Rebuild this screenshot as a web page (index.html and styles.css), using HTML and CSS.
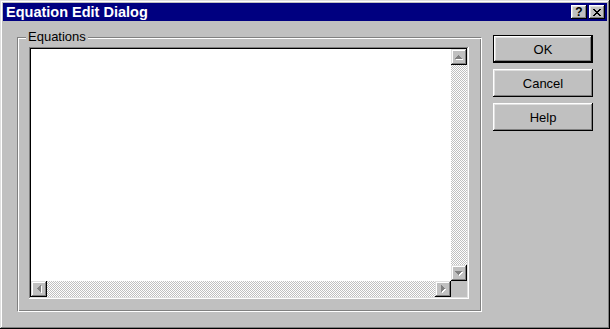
FILE: index.html
```html
<!DOCTYPE html>
<html lang="en">

<head>
  <meta charset="UTF-8">
  <title>Equation Edit Dialog</title>
  <link rel="stylesheet" href="styles.css">
</head>

<body>
  <div class="window">
    <div class="titlebar">
      <span class="title">Equation Edit Dialog</span>
      <div class="title-btns">
        <button class="tbtn help">?</button>
        <button class="tbtn close">
          <svg width="8" height="7" viewBox="0 0 8 7" shape-rendering="crispEdges">
            <path fill="#000" d="M0 0h2v1h-2zM6 0h2v1h-2zM1 1h2v1h-2zM5 1h2v1h-2zM2 2h4v1h-4zM3 3h2v1h-2zM2 4h4v1h-4zM1 5h2v1h-2zM5 5h2v1h-2zM0 6h2v1h-2zM6 6h2v1h-2z" />
          </svg>
        </button>
      </div>
    </div>

    <div class="dialog-body">
      <div class="groupbox">
        <span class="group-label">Equations</span>
        <div class="listbox">
          <div class="list-main">
            <div class="list-area"></div>
            <div class="vscroll">
              <div class="sbtn">
                <svg width="16" height="16" viewBox="0 0 16 16" shape-rendering="crispEdges">
                  <path fill="#fff" d="M8 7h1v1h-1zM7 8h3v1h-3zM6 9h5v1h-5zM5 10h7v1h-7z" />
                  <path fill="#808080" d="M7 6h1v1h-1zM6 7h3v1h-3zM5 8h5v1h-5zM4 9h7v1h-7z" />
                </svg>
              </div>
              <div class="track"></div>
              <div class="sbtn">
                <svg width="16" height="16" viewBox="0 0 16 16" shape-rendering="crispEdges">
                  <path fill="#fff" d="M5 7h7v1h-7zM6 8h5v1h-5zM7 9h3v1h-3zM8 10h1v1h-1z" />
                  <path fill="#808080" d="M4 6h7v1h-7zM5 7h5v1h-5zM6 8h3v1h-3zM7 9h1v1h-1z" />
                </svg>
              </div>
            </div>
          </div>
          <div class="list-bottom">
            <div class="hscroll">
              <div class="sbtn">
                <svg width="16" height="16" viewBox="0 0 16 16" shape-rendering="crispEdges">
                  <path fill="#fff" d="M7 8h1v1h-1zM8 7h1v3h-1zM9 6h1v5h-1zM10 5h1v7h-1z" />
                  <path fill="#808080" d="M6 7h1v1h-1zM7 6h1v3h-1zM8 5h1v5h-1zM9 4h1v7h-1z" />
                </svg>
              </div>
              <div class="track"></div>
              <div class="sbtn">
                <svg width="16" height="16" viewBox="0 0 16 16" shape-rendering="crispEdges">
                  <path fill="#fff" d="M7 5h1v7h-1zM8 6h1v5h-1zM9 7h1v3h-1zM10 8h1v1h-1z" />
                  <path fill="#808080" d="M6 4h1v7h-1zM7 5h1v5h-1zM8 6h1v3h-1zM9 7h1v1h-1z" />
                </svg>
              </div>
            </div>
            <div class="corner"></div>
          </div>
        </div>
      </div>

      <div class="buttons">
        <button class="btn default">OK</button>
        <button class="btn">Cancel</button>
        <button class="btn">Help</button>
      </div>
    </div>
  </div>
</body>

</html>
```

FILE: styles.css
```css
* {
  margin: 0;
  padding: 0;
  box-sizing: border-box;
}

body {
  width: 610px;
  height: 329px;
  font-family: "Liberation Sans", Arial, sans-serif;
  font-size: 13px;
  background: #c0c0c0;
}

.window {
  width: 610px;
  height: 329px;
  padding: 3px;
  background: #c0c0c0;
  box-shadow: inset -1px -1px #000, inset 1px 1px #dfdfdf, inset -2px -2px #808080, inset 2px 2px #fff;
}

.titlebar {
  height: 18px;
  display: flex;
  align-items: center;
  justify-content: space-between;
  padding: 0 2px 0 3px;
  background: #000080;
  color: #fff;
}

.title {
  font-weight: bold;
  font-size: 14.5px;
  line-height: 18px;
}

.title-btns {
  display: flex;
  gap: 2px;
}

.tbtn {
  width: 16px;
  height: 14px;
  border: none;
  background: #c0c0c0;
  box-shadow: inset -1px -1px #000, inset 1px 1px #fff, inset -2px -2px #808080, inset 2px 2px #dfdfdf;
  display: flex;
  align-items: center;
  justify-content: center;
  font-family: "Liberation Sans", Arial, sans-serif;
  font-weight: bold;
  font-size: 12px;
  line-height: 14px;
  color: #000;
}

.tbtn svg {
  display: block;
  margin-left: -1px;
}

.dialog-body {
  display: flex;
  padding: 14px 0 0 14px;
}

.groupbox {
  position: relative;
  width: 465px;
  height: 275px;
  margin-top: 2px;
  border-top: 1px solid #808080;
  border-left: 1px solid #808080;
  border-right: 1px solid #fff;
  border-bottom: 1px solid #fff;
  box-shadow: inset 1px 1px #fff, inset -1px -1px #808080;
  padding: 9px 0 0 11px;
}

.group-label {
  position: absolute;
  top: -9px;
  left: 8px;
  padding: 0 2px;
  line-height: 15px;
  background: #c0c0c0;
  color: #000;
}

.listbox {
  width: 440px;
  height: 252px;
  padding: 2px;
  display: flex;
  flex-direction: column;
  background: #c0c0c0;
  box-shadow: inset -1px -1px #fff, inset 1px 1px #808080, inset -2px -2px #dfdfdf, inset 2px 2px #000;
}

.list-main {
  flex: 1;
  display: flex;
}

.list-area {
  flex: 1;
  background: #fff;
}

.vscroll {
  width: 16px;
  display: flex;
  flex-direction: column;
}

.list-bottom {
  height: 16px;
  display: flex;
}

.hscroll {
  flex: 1;
  display: flex;
}

.track {
  flex: 1;
  background: repeating-conic-gradient(#fff 0 25%, #c0c0c0 0 50%) 0 0 / 2px 2px;
}

.sbtn {
  width: 16px;
  height: 16px;
  background: #c0c0c0;
  box-shadow: inset -1px -1px #000, inset 1px 1px #dfdfdf, inset -2px -2px #808080, inset 2px 2px #fff;
}

.sbtn svg {
  display: block;
}

.corner {
  width: 16px;
  background: #c0c0c0;
}

.buttons {
  display: flex;
  flex-direction: column;
  gap: 6px;
  margin-left: 11px;
}

.btn {
  width: 100px;
  height: 28px;
  border: none;
  background: #c0c0c0;
  font-family: "Liberation Sans", Arial, sans-serif;
  font-size: 13px;
  color: #000;
  box-shadow: inset -1px -1px #000, inset 1px 1px #fff, inset -2px -2px #808080, inset 2px 2px #dfdfdf;
}

.btn.default {
  border: 1px solid #000;
  box-shadow: inset -1px -1px #000, inset 1px 1px #fff, inset -2px -2px #808080, inset 2px 2px #dfdfdf;
}
```
